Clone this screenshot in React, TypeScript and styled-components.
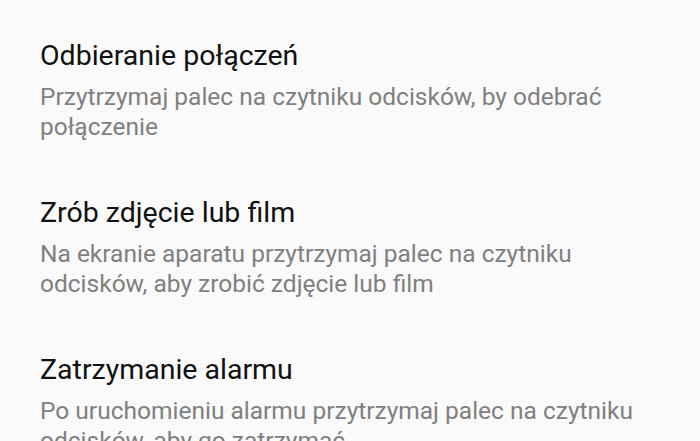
import React from "react";
import styled, { createGlobalStyle } from "styled-components";

const GlobalStyle = createGlobalStyle`
    html, body {
        margin: 0;
        padding: 0;
        background: #fafafa;
        overflow: hidden;
    }
`;

const List = styled.div`
    display: flex;
    flex-direction: column;
    gap: 54.5px;
    padding: 39px 40px 0 40px;
    height: 441px;
    box-sizing: border-box;
    overflow: hidden;
    background: #fafafa;
    font-family: Roboto, "Noto Sans", sans-serif;
`;

const Item = styled.div`
    display: flex;
    flex-direction: column;
    gap: 8.5px;
`;

const Title = styled.div`
    font-size: 28.5px;
    line-height: 34px;
    color: #111111;
`;

const Summary = styled.div`
    font-size: 24.5px;
    line-height: 30px;
    color: #808080;
`;

type Setting = {
    title: string,
    summary: string,
}

const settings: Setting[] = [
    {
        title: "Odbieranie połączeń",
        summary: "Przytrzymaj palec na czytniku odcisków, by odebrać połączenie",
    },
    {
        title: "Zrób zdjęcie lub film",
        summary: "Na ekranie aparatu przytrzymaj palec na czytniku odcisków, aby zrobić zdjęcie lub film",
    },
    {
        title: "Zatrzymanie alarmu",
        summary: "Po uruchomieniu alarmu przytrzymaj palec na czytniku odcisków, aby go zatrzymać",
    },
];

export default function App() {
    return (
        <>
            <GlobalStyle />
            <List>
                {settings.map(s => (
                    <Item key={s.title}>
                        <Title>{s.title}</Title>
                        <Summary>{s.summary}</Summary>
                    </Item>
                ))}
            </List>
        </>
    );
}
